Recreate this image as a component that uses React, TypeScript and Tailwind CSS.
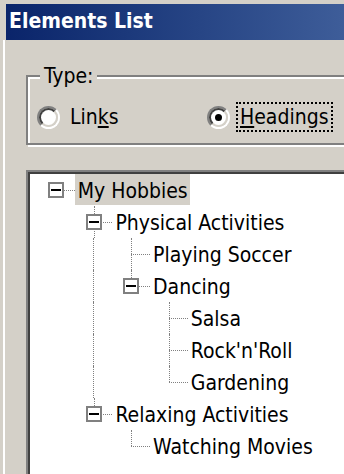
import React from 'react';

type Row = {
  label: string;
  level: number;
  box?: boolean;
  selected?: boolean;
  next: boolean;
  guides: boolean[];
};

const rows: Row[] = [
  { label: 'My Hobbies', level: 0, box: true, selected: true, next: false, guides: [] },
  { label: 'Physical Activities', level: 1, box: true, next: true, guides: [false] },
  { label: 'Playing Soccer', level: 2, next: true, guides: [false, true] },
  { label: 'Dancing', level: 2, box: true, next: false, guides: [false, true] },
  { label: 'Salsa', level: 3, next: true, guides: [false, true, false] },
  { label: "Rock'n'Roll", level: 3, next: true, guides: [false, true, false] },
  { label: 'Gardening', level: 3, next: false, guides: [false, true, false] },
  { label: 'Relaxing Activities', level: 1, box: true, next: false, guides: [false] },
  { label: 'Watching Movies', level: 2, next: false, guides: [false, false] },
];

function Radio({ checked }: { checked?: boolean }) {
  return (
    <span className="w-[23px] h-[23px] shrink-0 rounded-full border-2 border-t-[#808080] border-l-[#808080] border-b-white border-r-white">
      <span className="flex items-center justify-center w-full h-full rounded-full border-2 border-t-[#404040] border-l-[#404040] border-b-[#d4d0c8] border-r-[#d4d0c8] bg-white">
        {checked && <span className="w-[7px] h-[7px] rounded-full bg-black" />}
      </span>
    </span>
  );
}

function TreeRow({ row }: { row: Row }) {
  return (
    <div className="flex h-8 pl-[7px]">
      {row.guides.map((g, i) => (
        <div key={i} className="w-[37.7px] shrink-0 flex justify-center">
          {g && <div className="w-0 h-full border-l border-dotted border-[#808080]" />}
        </div>
      ))}
      {/* connector + expand box */}
      <div className="relative w-[37.7px] shrink-0">
        {row.level > 0 && (
          <div className="absolute left-1/2 top-0 h-1/2 border-l border-dotted border-[#808080]" />
        )}
        {row.next && (
          <div className="absolute left-1/2 top-1/2 bottom-0 border-l border-dotted border-[#808080]" />
        )}
        <div className="absolute left-1/2 right-0 top-1/2 border-t border-dotted border-[#808080]" />
        {row.box && (
          <div className="absolute left-1/2 top-1/2 -translate-x-1/2 -translate-y-1/2 w-4 h-4 bg-white border-2 border-[#808080] flex items-center justify-center">
            <div className="w-[10px] h-[2px] bg-black" />
          </div>
        )}
      </div>
      <div
        className={
          'h-[31px] pl-[3px] pr-[2px] pt-[3px] leading-[28px] whitespace-nowrap text-black ' +
          (row.selected ? 'bg-[#d4d0c8]' : '')
        }
      >
        {row.label}
      </div>
    </div>
  );
}

export default function App() {
  return (
    <div className="w-[344px] h-[474px] overflow-hidden bg-[#d4d0c8] flex font-['DejaVu_Sans_Condensed','Liberation_Sans',sans-serif] text-[21px]">
      {/* Window frame */}
      <div className="w-[6px] shrink-0 flex">
        <div className="w-[3px]" />
        <div className="w-[2px] bg-white mt-[40px]" />
      </div>

      <div className="flex-1 flex flex-col pt-1 min-w-0">
        {/* Title bar */}
        <div className="h-9 shrink-0 flex items-center pl-[3px] bg-gradient-to-r from-[#0a246a] to-[#3e5d99]">
          <span className="text-white font-bold text-[21px]">Elements List</span>
        </div>

        <div className="flex-1 flex flex-col pl-5 overflow-hidden">
          {/* Group box */}
          <div className="relative mt-[35px] w-[340px] h-[70px] shrink-0 border-2 border-[#808080] shadow-[2px_2px_0_#ffffff,inset_2px_2px_0_#ffffff]">
            <span className="absolute -top-[14px] left-[12px] px-[4px] bg-[#d4d0c8] leading-[26px] text-black">Type:</span>
            <div className="flex items-center pl-[9px] pt-[25px]">
              <div className="flex items-center w-[170px]">
                <Radio />
                <span className="ml-[10px] leading-[26px]">
                  Lin<span className="underline underline-offset-2">k</span>s
                </span>
              </div>
              <div className="flex items-center">
                <Radio checked />
                <span className="ml-[6px] px-[2px] border-2 border-dotted border-black leading-[26px]">
                  <span className="underline underline-offset-2">H</span>eadings
                </span>
              </div>
            </div>
          </div>

          {/* Tree view */}
          <div className="mt-[25px] w-[340px] flex-1 border-t-2 border-l-2 border-[#808080]">
            <div className="h-full border-t-2 border-l-2 border-[#404040] bg-white">
              {rows.map((r) => (
                <TreeRow key={r.label} row={r} />
              ))}
            </div>
          </div>
        </div>
      </div>
    </div>
  );
}
